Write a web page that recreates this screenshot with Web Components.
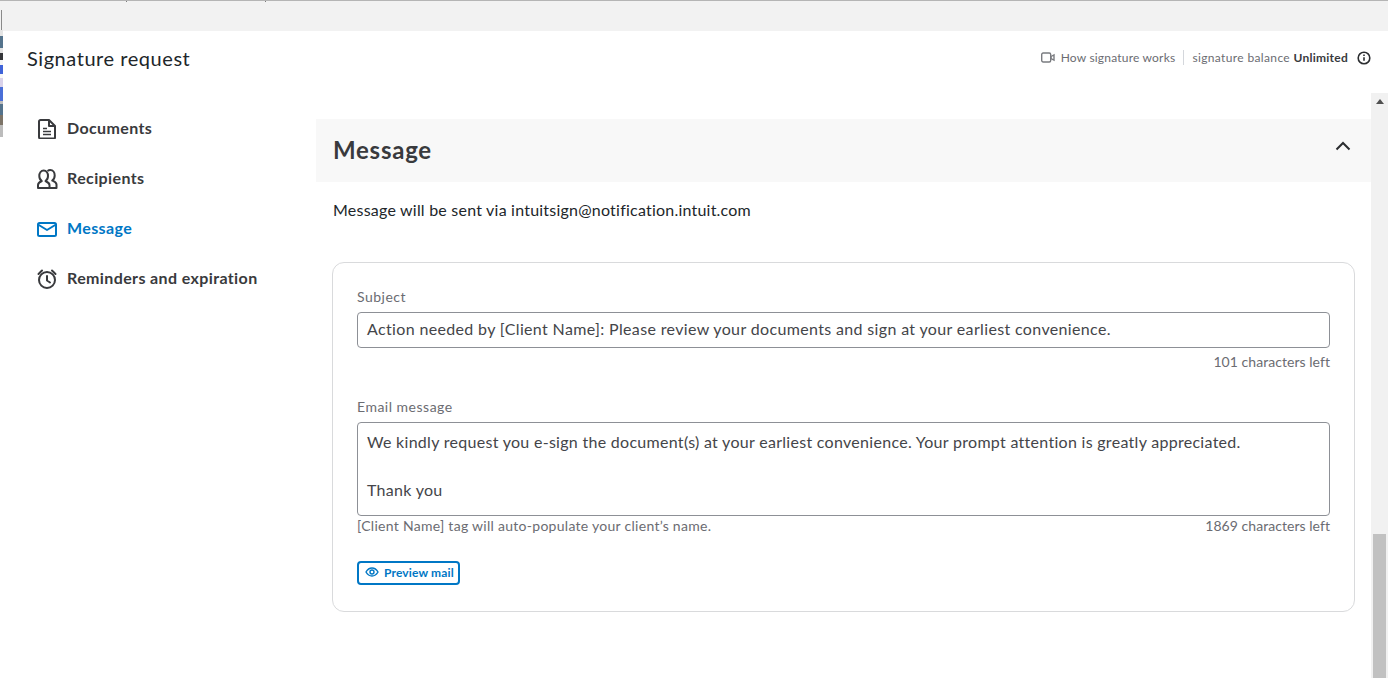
<!DOCTYPE html>
<html>
<head>
<meta charset="utf-8">
<title>Signature request</title>
<style>
  html, body { margin: 0; height: 100%; overflow: hidden; background: #fff; }
  body { font-family: Lato, "Noto Sans", sans-serif; color: #393a3d; }
</style>
</head>
<body>
<sig-app></sig-app>

<template id="sig-app-tpl">
  <style>
    :host { display: flex; height: 678px; }
    /* sliver of the page behind the modal */
    .edge { width: 3px; flex: none; display: flex; flex-direction: column; border-top: 1px solid #b5b5b5; box-sizing: border-box; }
    .edge div { flex: none; }
    .main { flex: 1; display: flex; flex-direction: column; min-width: 0; }
    .topstrip {
      height: 30px; flex: none; border-top: 1px solid #b5b5b5;
      background:
        linear-gradient(#7c7c7c, #7c7c7c) 123px 0 / 1px 1px no-repeat,
        linear-gradient(#7c7c7c, #7c7c7c) 262px 0 / 1px 1px no-repeat,
        #f2f2f2;
    }
  </style>
  <div class="edge">
    <div style="height:9px;background:#f2f2f2"></div>
    <div style="height:20px;background:linear-gradient(90deg,#f2f2f2 33%,#8a8a8a 33%,#8a8a8a 66%,#f2f2f2 66%)"></div>
    <div style="height:6px;background:#e4e4e4"></div>
    <div style="height:12px;background:#54738c"></div>
    <div style="height:5px;background:#e2e2e2"></div>
    <div style="height:7px;background:#34363a"></div>
    <div style="height:5px;background:#f4f4f4"></div>
    <div style="height:9px;background:#3f63d8"></div>
    <div style="height:4px;background:#f7f7f7"></div>
    <div style="height:9px;background:#d9d2ea"></div>
    <div style="height:14px;background:#4a6fd8"></div>
    <div style="height:3px;background:#bdbdbd"></div>
    <div style="height:11px;background:#54738c"></div>
    <div style="height:10px;background:#7d7468"></div>
    <div style="height:12px;background:#bcbcbc"></div>
  </div>
  <div class="main">
    <div class="topstrip"></div>
    <sig-header></sig-header>
    <sig-body></sig-body>
  </div>
</template>

<template id="sig-header-tpl">
  <style>
    :host { display: flex; align-items: center; height: 56px; padding: 0 17px 0 24px; flex: none; }
    h1 { margin: -2px 0 0; font-size: 20px; font-weight: 400; color: #21262a; letter-spacing: .55px; flex: 1; }
    .right { display: flex; align-items: center; font-size: 12px; color: #6b6c72; letter-spacing: .2px; margin-top: -3px; }
    .how { display: flex; align-items: center; gap: 6px; padding-right: 8px; border-right: 1px solid #d4d7dc; height: 15px; }
    .bal { padding-left: 8px; letter-spacing: .36px; }
    b { color: #393a3d; font-weight: 700; letter-spacing: .25px; }
    .info { margin-left: 9px; display: block; }
    svg { display: block; }
  </style>
  <h1>Signature request</h1>
  <div class="right">
    <div class="how">
      <svg width="14" height="11" viewBox="0 0 14 11" fill="none" stroke="#7a7c80" stroke-width="1.4"><rect x=".7" y="1" width="9" height="9" rx="1.5"/><path d="M10 4.500l3-1.600v5.200L10 6.500z"/></svg>
      <span>How signature works</span>
    </div>
    <div class="bal">signature balance <b>Unlimited</b></div>
    <svg class="info" width="14" height="14" viewBox="0 0 14 14" fill="none" stroke="#2b2d30" stroke-width="1.600"><circle cx="7" cy="7" r="5.800"/><path d="M7 6.200v3.600M7 3.600v1.400"/></svg>
  </div>
</template>

<template id="sig-body-tpl">
  <style>
    :host { display: flex; flex: 1; min-height: 0; padding-top: 6px; }
    nav { width: 313px; flex: none; padding: 10px 0 0 33px; box-sizing: border-box; display: flex; flex-direction: column; }
    .content { flex: 1; min-width: 0; padding-top: 26px; }
  </style>
  <nav>
    <sig-nav-item>
      <svg slot="icon" width="22" height="22" viewBox="0 0 22 22" fill="none" stroke="currentColor" stroke-width="2" stroke-linejoin="round"><path d="M3 4.500A1.500 1.500 0 0 1 4.500 3H13l6 6v11.500a1 1 0 0 1-1 1H4.500A1.500 1.500 0 0 1 3 20z"/><path d="M13 3v6h6"/><path d="M7 11.500h4M7 14.500h8M7 17.500h8" stroke-width="1.700"/></svg>
      Documents
    </sig-nav-item>
    <sig-nav-item>
      <svg slot="icon" width="22" height="22" viewBox="0 0 22 22" fill="none" stroke="currentColor" stroke-width="2" stroke-linejoin="round"><g transform="translate(0 1)"><path d="M2 20v-3c0-2 1.800-3 3.800-4-1.500-1-2.500-2.800-2.500-5 0-3 1.800-5.500 4.400-5.500S12 5 12 8c0 2.200-1 4-2.500 5 2 1 4 2 4 4v3z"/><path d="M11.500 3c.8-.6 1.700-.9 2.700-.9 2.800 0 4.500 2.400 4.500 5.400 0 2.200-1 4-2.500 5 2 1 4.300 2 4.300 4V20h-7"/></g></svg>
      Recipients
    </sig-nav-item>
    <sig-nav-item active>
      <svg slot="icon" width="22" height="22" viewBox="0 0 22 22" fill="none" stroke="currentColor" stroke-width="2" stroke-linejoin="round"><rect x="2" y="6" width="18" height="13" rx="1.500"/><path d="M2 7.500l9 5.500 9-5.500"/></svg>
      Message
    </sig-nav-item>
    <sig-nav-item>
      <svg slot="icon" width="22" height="22" viewBox="0 0 22 22" fill="none" stroke="currentColor" stroke-width="2" stroke-linecap="round" stroke-linejoin="round"><circle cx="11" cy="13" r="8"/><path d="M11 9v4.500l3 2M2.500 7l3.500-3.500M19.500 7L16 3.500"/></svg>
      Reminders and expiration
    </sig-nav-item>
  </nav>
  <div class="content">
    <sig-section heading="Message">
      <sig-card></sig-card>
    </sig-section>
  </div>
  <sig-scrollbar></sig-scrollbar>
</template>

<template id="sig-nav-item-tpl">
  <style>
    :host { display: flex; align-items: center; gap: 9px; height: 50px; font-size: 16px; font-weight: 700; color: #393a3d; letter-spacing: .38px; }
    :host([active]) { color: #0077c5; }
    .icon { width: 22px; height: 22px; flex: none; }
    .text { padding-bottom: 2px; }
    ::slotted(svg) { display: block; }
  </style>
  <span class="icon"><slot name="icon"></slot></span>
  <span class="text"><slot></slot></span>
</template>

<template id="sig-section-tpl">
  <style>
    :host { display: block; }
    .bar { height: 63px; background: #f8f8f8; display: flex; align-items: center; justify-content: space-between; padding: 0 20px 0 17px; }
    h2 { margin: -2px 0 0; font-size: 24px; font-weight: 700; color: #393a3d; letter-spacing: .75px; }
    .bar svg { display: block; margin-top: -9px; }
    p { margin: 0; height: 80px; padding: 19px 0 0 17px; box-sizing: border-box; font-size: 16px; color: #21262a; letter-spacing: .22px; line-height: 18px; }
    .wrap { padding: 0 16px; }
  </style>
  <div class="bar">
    <h2></h2>
    <svg width="16" height="10" viewBox="0 0 16 10" fill="none" stroke="#2b2d30" stroke-width="2"><path d="M1.500 8.500L8 2l6.500 6.500"/></svg>
  </div>
  <p>Message will be sent via intuitsign@notification.intuit.com</p>
  <div class="wrap"><slot></slot></div>
</template>

<template id="sig-card-tpl">
  <style>
    :host { display: block; box-sizing: border-box; height: 350px; border: 1px solid #d9dadc; border-radius: 12px; padding: 26px 24px 0; }
    .btn { display: inline-flex; align-items: center; gap: 5px; box-sizing: border-box; height: 24px; padding: 0 4px 2px 6px; border: 2px solid #0077c5; border-radius: 4px; color: #0077c5; font: 700 12px Lato, sans-serif; letter-spacing: .15px; background: #fff; margin-top: 27px; }
    .btn svg { display: block; }
  </style>
  <sig-field label="Subject" right="101 characters left" height="36">Action needed by [Client Name]: Please review your documents and sign at your earliest convenience.</sig-field>
  <sig-field label="Email message" left="[Client Name] tag will auto-populate your client’s name." right="1869 characters left" height="94" multi style="margin-top:29px">We kindly request you e-sign the document(s) at your earliest convenience. Your prompt attention is greatly appreciated.

Thank you</sig-field>
  <button class="btn">
    <svg width="14" height="10" viewBox="0 0 14 10" fill="none" stroke="#0077c5" stroke-width="1.400"><path d="M1 5c1.500-2.600 3.600-4 6-4s4.500 1.400 6 4c-1.500 2.600-3.600 4-6 4S2.500 7.600 1 5z"/><circle cx="7" cy="5" r="2"/></svg>
    Preview mail
  </button>
</template>

<template id="sig-field-tpl">
  <style>
    :host { display: block; font-size: 14px; }
    .label { color: #6b6c72; line-height: 16px; margin-bottom: 7px; letter-spacing: .5px; }
    .box { box-sizing: border-box; border: 1px solid #8d9096; border-radius: 4px; padding: 0 9px 3px; font-size: 16px; letter-spacing: .35px; color: #444549; display: flex; align-items: center; white-space: pre-wrap; }
    :host([multi]) .box { align-items: flex-start; padding: 7px 9px 0; line-height: 24px; letter-spacing: .29px; }
    .foot { display: flex; justify-content: space-between; color: #6b6c72; line-height: 16px; margin-top: 6px; letter-spacing: .05px; }
    :host([multi]) .foot { margin-top: 2px; }
    .l { letter-spacing: .28px; }
  </style>
  <div class="label"></div>
  <div class="box"><slot></slot></div>
  <div class="foot"><span class="l"></span><span class="r"></span></div>
</template>

<template id="sig-scrollbar-tpl">
  <style>
    :host { display: flex; flex-direction: column; width: 17px; flex: none; background: #f1f1f1; }
    .up { height: 17px; display: flex; align-items: center; justify-content: center; }
    .space { flex: 1; }
    .thumb { height: 144px; background: #c1c1c1; margin: 0 2px; }
  </style>
  <div class="up"><svg width="8" height="5" viewBox="0 0 8 5"><path d="M4 0l4 5H0z" fill="#505050"/></svg></div>
  <div class="space"></div>
  <div class="thumb"></div>
</template>

<script>
  function stamp(el, id) {
    const root = el.attachShadow({ mode: 'open' });
    root.appendChild(document.getElementById(id).content.cloneNode(true));
    return root;
  }

  class SigApp extends HTMLElement {
    constructor() { super(); stamp(this, 'sig-app-tpl'); }
  }
  class SigHeader extends HTMLElement {
    constructor() { super(); stamp(this, 'sig-header-tpl'); }
  }
  class SigBody extends HTMLElement {
    constructor() { super(); stamp(this, 'sig-body-tpl'); }
  }
  class SigNavItem extends HTMLElement {
    constructor() { super(); stamp(this, 'sig-nav-item-tpl'); }
  }
  class SigSection extends HTMLElement {
    constructor() { super(); stamp(this, 'sig-section-tpl'); }
    connectedCallback() {
      this.shadowRoot.querySelector('h2').textContent = this.getAttribute('heading') || '';
    }
  }
  class SigCard extends HTMLElement {
    constructor() { super(); stamp(this, 'sig-card-tpl'); }
  }
  class SigField extends HTMLElement {
    constructor() { super(); stamp(this, 'sig-field-tpl'); }
    connectedCallback() {
      const root = this.shadowRoot;
      root.querySelector('.label').textContent = this.getAttribute('label') || '';
      root.querySelector('.l').textContent = this.getAttribute('left') || '';
      root.querySelector('.r').textContent = this.getAttribute('right') || '';
      root.querySelector('.box').style.height = (this.getAttribute('height') || 36) + 'px';
    }
  }
  class SigScrollbar extends HTMLElement {
    constructor() { super(); stamp(this, 'sig-scrollbar-tpl'); }
  }

  customElements.define('sig-app', SigApp);
  customElements.define('sig-header', SigHeader);
  customElements.define('sig-body', SigBody);
  customElements.define('sig-nav-item', SigNavItem);
  customElements.define('sig-section', SigSection);
  customElements.define('sig-card', SigCard);
  customElements.define('sig-field', SigField);
  customElements.define('sig-scrollbar', SigScrollbar);
</script>
</body>
</html>
